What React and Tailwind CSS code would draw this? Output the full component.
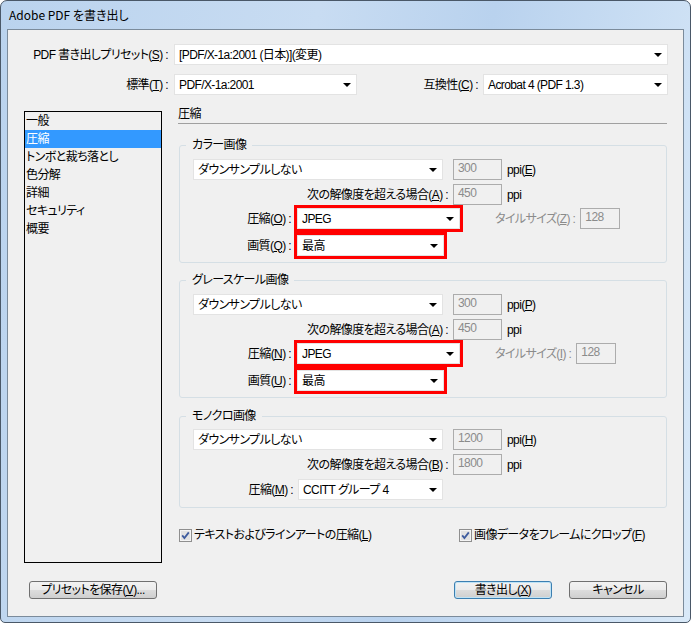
const Arrow = () => (
  <span className="h-0 w-0 border-x-[4px] border-t-[4px] border-x-transparent border-t-black" />
);

function Select({ value, className }) {
  return (
    <div
      className={`flex h-[21px] shrink-0 items-center justify-between border border-[#e3e3e3] bg-white pl-[4px] pr-[5px] ${className}`}
    >
      <span className="whitespace-nowrap">{value}</span>
      <Arrow />
    </div>
  );
}

function Field({ value, className }) {
  return (
    <div
      className={`flex h-[21px] shrink-0 items-start border border-[#acacac] pl-[4px] pt-[1px] text-[#8b8b8b] ${className}`}
    >
      {value}
    </div>
  );
}

function Group({ title, className, children }) {
  return (
    <fieldset
      className={`ml-[1px] w-[488px] rounded-[3px] border border-[#d5dfe5] pl-[13px] ${className}`}
    >
      <legend className="-ml-[7px] px-[6px] leading-[14px]">{title}</legend>
      {children}
    </fieldset>
  );
}

function Check() {
  return (
    <svg width="13" height="13" viewBox="0 0 13 13" className="shrink-0">
      <rect x="0.5" y="0.5" width="12" height="12" fill="#f4f4f4" stroke="#8f8f8f" />
      <rect x="2" y="2" width="9" height="9" fill="#e2e2e2" />
      <path d="M3.2 6.4 L5.4 9 L9.8 3.4" stroke="#3d5b9e" strokeWidth="1.8" fill="none" />
    </svg>
  );
}

function Button({ children, className, primary }) {
  return (
    <div
      className={`flex h-[18px] shrink-0 items-center justify-center rounded-[3px] border bg-[linear-gradient(#f2f2f2,#ebebeb_50%,#dddddd_50%,#cfcfcf)] ${
        primary
          ? "border-[#3c7fb1] [box-shadow:inset_0_0_0_1px_#bfe3f6]"
          : "border-[#707070]"
      } ${className}`}
    >
      {children}
    </div>
  );
}

function ImageGroup({ title, ppiKey, aKey, compKey, qualKey, tileKey, className }) {
  return (
    <Group title={title} className={`pt-[7px] pb-[3px] ${className}`}>
      <div className="flex items-center">
        <Select className="w-[250px]" value="ダウンサンプルしない" />
        <Field className="ml-[10px] w-[49px]" value="300" />
        <span className="ml-[5px]">
          ppi(<u>{ppiKey}</u>)
        </span>
      </div>
      <div className="mt-[4px] flex items-center">
        <span className="w-[255px] text-right">
          次の解像度を超える場合(<u>{aKey}</u>) :
        </span>
        <Field className="ml-[5px] w-[49px]" value="450" />
        <span className="ml-[5px]">ppi</span>
      </div>
      <div className="flex items-center">
        <span className="w-[98px] text-right">
          圧縮(<u>{compKey}</u>) :
        </span>
        <div className="ml-[3px] border-[3px] border-[#ff0000]">
          <Select className="w-[163px]" value="JPEG" />
        </div>
        <span className="ml-[32px] text-[#8b8b8b]">
          タイルサイズ(<u>{tileKey}</u>) :
        </span>
        <Field className="ml-[5px] w-[40px]" value="128" />
      </div>
      <div className="flex items-center">
        <span className="w-[98px] text-right">
          画質(<u>{qualKey}</u>) :
        </span>
        <div className="ml-[3px] border-[3px] border-[#ff0000]">
          <Select className="w-[147px]" value="最高" />
        </div>
      </div>
    </Group>
  );
}

const items = ["一般", "圧縮", "トンボと裁ち落とし", "色分解", "詳細", "セキュリティ", "概要"];

export default function App() {
  return (
    <div className="h-[623px] w-[691px] bg-white font-['Liberation_Sans','Noto_Sans_CJK_JP',sans-serif] text-[12px] leading-[14px] tracking-[-0.6px] text-black [font-feature-settings:'palt']">
      <div className="flex h-full flex-col rounded-t-[7px] rounded-b-[5px] border border-[#4a5868] bg-[linear-gradient(100deg,#bad3ee_0%,#c8dcf2_40%,#b9d2ee_62%,#d9e9f8_100%)] px-[6px] pb-[5px]">
        <div className="flex h-[28px] shrink-0 items-center pl-[2px] font-['Noto_Sans_CJK_JP',sans-serif] text-[12px] tracking-normal">
          Adobe PDF を書き出し
        </div>

        <div className="flex flex-1 flex-col border border-[#7b8b9b] bg-[#f0f0f0] pt-[14px]">
          <div className="flex items-center">
            <span className="w-[160px] text-right">
              PDF 書き出しプリセット(<u>S</u>) :
            </span>
            <Select className="ml-[6px] w-[494px]" value="[PDF/X-1a:2001 (日本)](変更)" />
          </div>
          <div className="mt-[9px] flex items-center">
            <span className="w-[160px] text-right">
              標準(<u>T</u>) :
            </span>
            <Select className="ml-[6px] w-[183px]" value="PDF/X-1a:2001" />
            <span className="w-[121px] text-right">
              互換性(<u>C</u>) :
            </span>
            <Select className="ml-[5px] w-[185px]" value="Acrobat 4 (PDF 1.3)" />
          </div>

          <div className="mt-[5px] flex">
            <div className="ml-[16px] mt-[11px] h-[452px] w-[138px] shrink-0 border border-black">
              {items.map((it) => (
                <div
                  key={it}
                  className={`flex h-[18px] items-center pl-[1px] ${
                    it === "圧縮" ? "bg-[#3399ff] text-white" : ""
                  }`}
                >
                  {it}
                </div>
              ))}
            </div>

            <div className="ml-[16px] w-[489px]">
              <div className="h-[24px] border-b border-[#a0a0a0] pt-[7px]">圧縮</div>

              <ImageGroup
                className="mt-[14px]"
                title="カラー画像"
                ppiKey="E"
                aKey="A"
                compKey="O"
                qualKey="Q"
                tileKey="Z"
              />
              <ImageGroup
                className="mt-[10px]"
                title="グレースケール画像"
                ppiKey="P"
                aKey="A"
                compKey="N"
                qualKey="U"
                tileKey="I"
              />

              <Group title="モノクロ画像" className="mt-[11px] pt-[6px] pb-[7px]">
                <div className="flex items-center">
                  <Select className="w-[250px]" value="ダウンサンプルしない" />
                  <Field className="ml-[10px] w-[49px]" value="1200" />
                  <span className="ml-[5px]">
                    ppi(<u>H</u>)
                  </span>
                </div>
                <div className="mt-[4px] flex items-center">
                  <span className="w-[255px] text-right">
                    次の解像度を超える場合(<u>B</u>) :
                  </span>
                  <Field className="ml-[5px] w-[49px]" value="1800" />
                  <span className="ml-[5px]">ppi</span>
                </div>
                <div className="mt-[4px] flex items-center">
                  <span className="w-[100px] text-right">
                    圧縮(<u>M</u>) :
                  </span>
                  <Select className="ml-[5px] w-[145px]" value="CCITT グループ 4" />
                </div>
              </Group>

              <div className="mt-[20px] flex items-center pl-[1px]">
                <div className="flex w-[280px] items-center">
                  <Check />
                  <span className="ml-[2px]">
                    テキストおよびラインアートの圧縮(<u>L</u>)
                  </span>
                </div>
                <Check />
                <span className="ml-[2px]">
                  画像データをフレームにクロップ(<u>F</u>)
                </span>
              </div>
            </div>
          </div>

          <div className="mt-[18px] flex items-center">
            <Button className="ml-[21px] w-[128px]">
              プリセットを保存(<u>V</u>)...
            </Button>
            <Button primary className="ml-auto w-[98px]">
              書き出し(<u>X</u>)
            </Button>
            <Button className="ml-[17px] mr-[16px] w-[98px]">キャンセル</Button>
          </div>
        </div>
      </div>
    </div>
  );
}
